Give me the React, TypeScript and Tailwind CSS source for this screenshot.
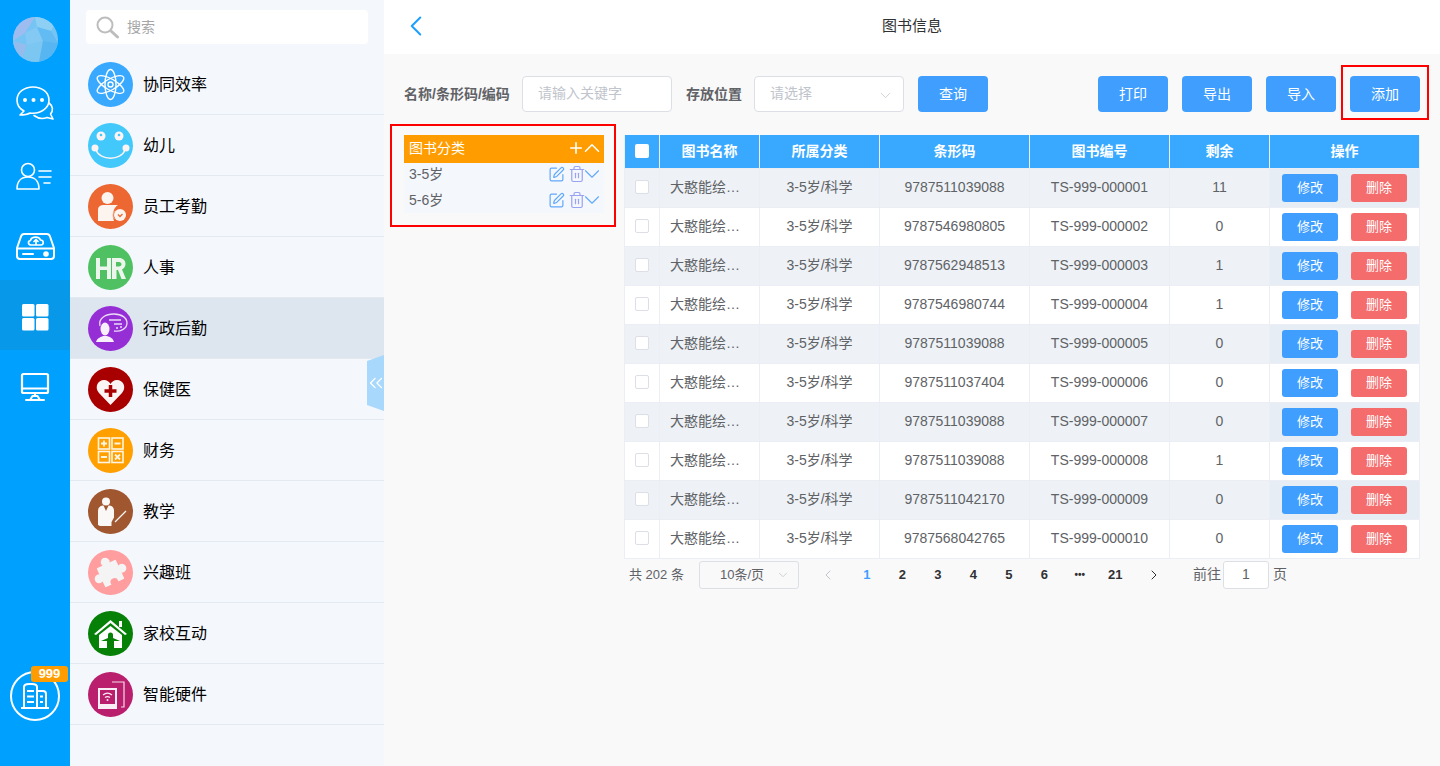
import { ChevronDown, ChevronLeft, ChevronRight, ChevronUp, ChevronsLeft, Plus, SquarePen, Trash2 } from "lucide-react";
import type { ReactNode } from "react";

const FONT = "font-['Liberation_Sans','Noto_Sans_CJK_SC',sans-serif]";

function RailIcon({ children, active, up }: { children: ReactNode; active?: boolean; up?: boolean }) {
  return (
    <div className={`h-[70px] flex items-center justify-center ${up ? "pb-1" : "pt-1"} ${active ? "bg-[#0798ea]" : ""}`}>
      <svg width="40" height="40" viewBox="0 0 40 40" fill="none" stroke="#fff" strokeWidth="1.6" strokeLinecap="round" strokeLinejoin="round">
        {children}
      </svg>
    </div>
  );
}

function MenuRow({ label, color, active, children }: { label: string; color: string; active?: boolean; children: ReactNode }) {
  return (
    <div className={`h-[61px] flex items-center pl-[18px] gap-[10px] border-b border-[#e3e9f1] ${active ? "bg-[#dde6ef]" : ""}`}>
      <svg width="45" height="45" viewBox="0 0 45 45" className="shrink-0">
        <circle cx="22.500" cy="22.500" r="22.500" fill={color} />
        {children}
      </svg>
      <span className="text-[16px] text-black pt-[2px]">{label}</span>
    </div>
  );
}

const books = [
  ["9787511039088", "TS-999-000001", "11"],
  ["9787546980805", "TS-999-000002", "0"],
  ["9787562948513", "TS-999-000003", "1"],
  ["9787546980744", "TS-999-000004", "1"],
  ["9787511039088", "TS-999-000005", "0"],
  ["9787511037404", "TS-999-000006", "0"],
  ["9787511039088", "TS-999-000007", "0"],
  ["9787511039088", "TS-999-000008", "1"],
  ["9787511042170", "TS-999-000009", "0"],
  ["9787568042765", "TS-999-000010", "0"],
];

function ToolButton({ label }: { label: string }) {
  return <button className="w-[70px] h-9 rounded bg-[#409eff] text-white text-[14px]">{label}</button>;
}

function TreeRow({ label }: { label: string }) {
  return (
    <div className="h-[22px] mb-1 flex items-center pl-[5px] text-[14px] text-[#606266]">
      <span className="flex-1">{label}</span>
      <SquarePen size={17} strokeWidth={1.7} className="text-[#62a9fb]" />
      <Trash2 size={18} strokeWidth={1.6} className="ml-[3px] text-[#9aa2f2]" />
      <ChevronDown size={26} strokeWidth={1} className="-ml-[7px] -mr-[1px] text-[#62a9fb]" />
    </div>
  );
}

export default function App() {
  return (
    <div className={`h-[766px] flex overflow-hidden ${FONT}`}>
      {/* icon rail */}
      <div className="w-[70px] shrink-0 bg-[#00a0ff] flex flex-col relative">
        <div className="h-[70px] pt-[17px] flex justify-center">
          <svg width="45" height="45" viewBox="0 0 45 45">
            <defs>
              <clipPath id="avatarClip">
                <circle cx="22.500" cy="22.500" r="22.500" />
              </clipPath>
            </defs>
            <g clipPath="url(#avatarClip)">
              <rect width="45" height="45" fill="#76c4f3" />
              <polygon points="0,0 22,0 12,16 0,24" fill="#9dbcf0" />
              <polygon points="22,0 45,0 38,14 24,10" fill="#8dcff5" />
              <polygon points="12,16 24,10 30,24 14,28" fill="#84c8f4" />
              <polygon points="0,24 14,28 8,45 0,45" fill="#94bdee" />
              <polygon points="24,10 38,14 45,26 30,24" fill="#62bbf2" />
              <polygon points="14,28 30,24 26,45 8,45" fill="#7cc6f2" />
              <polygon points="30,24 45,26 45,45 26,45" fill="#57b6f1" />
            </g>
          </svg>
        </div>
        <RailIcon up>
          <path d="M18 4C9 4 2 9.500 2 17c0 5 3 9 7 11l-4 4c4 0 7.500-.5 10-2 1 .2 2 .3 3 .3 9 0 16-5.800 16-13.300S27 4 18 4Z" />
          <circle cx="10" cy="17" r="2" fill="#fff" stroke="none" />
          <circle cx="18.500" cy="17" r="2" fill="#fff" stroke="none" />
          <circle cx="27" cy="17" r="2" fill="#fff" stroke="none" />
          <path d="M34 20c4 3 4.500 7.500 1.500 11l2.500 5-6-1.500c-4 1.500-9 1-13-2" />
        </RailIcon>
        <RailIcon>
          <circle cx="13" cy="13" r="6.500" />
          <path d="M2 32c0-8 4.500-12 11-12s11 4 11 12Z" />
          <path d="M24 14h12M24 20h12M29 26h6" />
        </RailIcon>
        <RailIcon>
          <path d="M9 7h23c1.500 0 2.500 1 3 2.500L39 21v8a3 3 0 0 1-3 3H5a3 3 0 0 1-3-3v-8L6 9.500C6.500 8 7.500 7 9 7Z" strokeWidth="2" />
          <path d="M3 21.500h35" strokeWidth="2" />
          <path d="M8 27h10" strokeWidth="2" />
          <circle cx="31" cy="27" r="2" fill="#fff" />
          <path d="M16 18c-3 0-3.500-4-.5-4.500 .5-4 8.500-5 10-.5 3.500 0 3.500 5 .5 5ZM21 18v-5M19 14.500l2-2 2 2" strokeWidth="1.700" />
        </RailIcon>
        <RailIcon active>
          <rect x="7" y="7" width="12.500" height="12.500" rx="1.500" fill="#fff" stroke="none" />
          <rect x="21" y="7" width="12.500" height="12.500" rx="1.500" fill="#fff" stroke="none" />
          <rect x="7" y="21" width="12.500" height="12.500" rx="1.500" fill="#fff" stroke="none" />
          <rect x="21" y="21" width="12.500" height="12.500" rx="1.500" fill="#fff" stroke="none" />
        </RailIcon>
        <RailIcon>
          <rect x="7" y="7" width="26" height="19" rx="1.500" strokeWidth="2.200" />
          <path d="M7 21.500h26" strokeWidth="2.200" />
          <path d="M20 26v3M15 33l2.500-4h5l2.500 4M11 33h18" strokeWidth="2" />
        </RailIcon>
        <div className="absolute left-[10px] top-[671px] w-[50px] h-[50px] rounded-full border-2 border-white flex items-center justify-center">
          <svg width="32" height="32" viewBox="0 0 32 32" fill="none" stroke="#fff" strokeWidth="2">
            <path d="M2 28h28" />
            <path d="M5 28V7c0-2 2-3 5-3h3c3 0 5 1 5 3v21" />
            <path d="M18 11h6c2 0 3 1 3 3v14" />
            <path d="M8 11h7M8 16.500h7M8 22h7M21 16.500h3M21 22h3" strokeWidth="2.200" />
          </svg>
        </div>
        <div className="absolute left-[31px] top-[666px] w-[37px] h-4 rounded-[3px] bg-[#ff9d00] text-white text-[13px] font-bold leading-4 text-center">
          999
        </div>
      </div>

      {/* app menu */}
      <div className="w-[314px] shrink-0 bg-[#f4f7fc] relative">
        <div className="h-[54px] pt-[10px] pl-4 pr-4">
          <div className="h-[34px] bg-white rounded flex items-center pl-[10px] gap-[8px]">
            <svg width="23" height="23" viewBox="0 0 23 23" fill="none" stroke="#bdbdbd" className="shrink-0">
              <circle cx="9" cy="9" r="7.500" strokeWidth="2" />
              <path d="M15 15l6.500 6" strokeWidth="3" strokeLinecap="round" />
            </svg>
            <span className="text-[14px] text-[#a6a6a6] pt-[1px]">搜索</span>
          </div>
        </div>
        <MenuRow label="协同效率" color="#39a9ff">
          <g fill="none" stroke="#fff" strokeWidth="1.400">
            <ellipse cx="22.500" cy="22.500" rx="15" ry="5.500" transform="rotate(30 22.500 22.500)" />
            <ellipse cx="22.500" cy="22.500" rx="15" ry="5.500" transform="rotate(90 22.500 22.500)" />
            <ellipse cx="22.500" cy="22.500" rx="15" ry="5.500" transform="rotate(150 22.500 22.500)" />
            <circle cx="22.500" cy="22.500" r="2.500" />
          </g>
        </MenuRow>
        <MenuRow label="幼儿" color="#43c8fb">
          <circle cx="13" cy="13" r="4.500" fill="#fdf3f3" />
          <circle cx="31" cy="13" r="4.500" fill="#fdf3f3" />
          <circle cx="13" cy="12" r="1.300" fill="#43c8fb" />
          <circle cx="31" cy="12" r="1.300" fill="#43c8fb" />
          <circle cx="7" cy="25" r="3.500" fill="#fdf3f3" />
          <circle cx="38" cy="25" r="3.500" fill="#fdf3f3" />
          <path d="M8 27c4 11 25 11 29 0" fill="none" stroke="#fdf3f3" strokeWidth="1.400" />
        </MenuRow>
        <MenuRow label="员工考勤" color="#ec6731">
          <circle cx="19.500" cy="14" r="6" fill="#fbf4ef" />
          <path d="M10 37V26c0-4 3-5 6-5h14c-5 3-6 10-4 16Z" fill="#fbf4ef" />
          <circle cx="32" cy="31" r="6" fill="#fbf4ef" />
          <path d="M30 30.500l2 2 2.500-2.500" fill="none" stroke="#ec6731" strokeWidth="1.300" />
          <path d="M26.500 27c-2 3-2 6 0 8" fill="none" stroke="#f5b59a" strokeWidth="1" />
        </MenuRow>
        <MenuRow label="人事" color="#4fc163">
          <path d="M8 13h4v8.500h7V13h4v21h-4v-9h-7v9H8Z" fill="#ecf6ed" />
          <path fillRule="evenodd" d="M24 13h7c4 0 6.500 2.500 6.500 6 0 2.500-1.500 4.500-3.500 5.500l4 9.500h-4.500l-3.500-9h-1.500v9H24Zm4 4v4.500h3c1.500 0 2.500-1 2.500-2.250S32.500 17 31 17Z" fill="#ecf6ed" />
        </MenuRow>
        <MenuRow label="行政后勤" color="#962ed6" active>
          <path d="M12 20c-2-8 6-12 14-12s13 4 13 9c0 6-7 9-13 8" fill="none" stroke="#eadcf6" strokeWidth="1.300" />
          <path d="M21 14h12M26 18h8M28 22h2M32 21h2" stroke="#eadcf6" strokeWidth="1.300" />
          <ellipse cx="17" cy="23" rx="4.500" ry="6.500" fill="#f7f0fb" />
          <path d="M8 36c1-4 5-5 7-6h4c3 1 6 2 7 6Z" fill="#f7f0fb" />
        </MenuRow>
        <MenuRow label="保健医" color="#a80000">
          <path d="M22.500 38 11 26C6 20 10 13 16 13c3 0 5.500 2 6.500 4 1-2 3.500-4 6.500-4 6 0 10 7 5 13Z" fill="#fbf4f4" />
          <path d="M20.750 18h3.500v4.250h4.250v3.500h-4.250V30h-3.500v-4.250H16.500v-3.500h4.250Z" fill="#a80000" />
        </MenuRow>
        <MenuRow label="财务" color="#ff9f00">
          <g fill="none" stroke="#fff5e0" strokeWidth="1.600">
            <rect x="10.500" y="10" width="11" height="11" />
            <rect x="24" y="10" width="11" height="11" />
            <rect x="10.500" y="23.500" width="11" height="11" />
            <rect x="24" y="23.500" width="11" height="11" />
            <path d="M13 15.500h6M16 12.500v6M26.500 15.500h6M13 29h6M27 26.500l5 5M32 26.500l-5 5" strokeWidth="1.800" />
          </g>
        </MenuRow>
        <MenuRow label="教学" color="#a0562f">
          <circle cx="18" cy="12.500" r="4" fill="#faf8f6" />
          <path d="M10 36V22c0-4 3-5.500 5.500-5.500L18 22l2.500-5.500c3 0 5.500 1.500 5.500 5v7L23.500 33v4H12Z" fill="#faf8f6" />
          <path d="M27 33l11-11" stroke="#faf8f6" strokeWidth="1.200" />
        </MenuRow>
        <MenuRow label="兴趣班" color="#ff9d9f">
          <g transform="rotate(-25 22.500 23.500)" fill="#f4f4f4">
            <rect x="12" y="13" width="21" height="21" rx="1" />
            <circle cx="22.500" cy="11" r="4.500" />
            <circle cx="35" cy="23.500" r="4.500" />
            <circle cx="10" cy="23.500" r="4.500" />
            <circle cx="22.500" cy="33" r="4" fill="#ff9d9f" />
          </g>
        </MenuRow>
        <MenuRow label="家校互动" color="#078007">
          <path d="M6 23 22.500 9 39 23l-2 1L22.500 12 8 24Z" fill="#fff" />
          <rect x="31" y="10" width="3" height="6" fill="#fff" />
          <path d="M11 37V24L22.500 15 34 24v13h-8v-7h6l-7-3v-3a2.500 2.500 0 1 0-5 0v3l-7 3h6v7Z" fill="#fff" />
        </MenuRow>
        <MenuRow label="智能硬件" color="#b91f6d">
          <path d="M24 10h12v25h-3" fill="none" stroke="#f6dcea" strokeWidth="1.200" />
          <rect x="10" y="16" width="19" height="21" fill="#f9eef4" />
          <rect x="12" y="18" width="15" height="14" fill="#b91f6d" />
          <path d="M15 23c3-2.500 6-2.500 9 0M17 25.500c2-1.500 3-1.500 5 0" fill="none" stroke="#f9eef4" strokeWidth="1.200" />
          <circle cx="19.500" cy="28" r="1" fill="#f9eef4" />
        </MenuRow>

        <div className="absolute right-0 top-[355px] w-[17px] h-[56px] bg-[#a8d8fb] [clip-path:polygon(0_6px,100%_0,100%_100%,0_calc(100%-6px))] flex items-center justify-center">
          <ChevronsLeft size={22} strokeWidth={1.4} className="text-white shrink-0" />
        </div>
      </div>

      {/* main */}
      <div className="flex-1 min-w-0 bg-[#f9f9fa] flex flex-col">
        <div className="h-[54px] shrink-0 bg-white flex items-center justify-center relative text-[15px] text-[#303133] pb-[2px]">
          <ChevronLeft size={34} strokeWidth={1.4} className="absolute left-[15px] top-[9px] text-[#1e9fff]" />
          图书信息
        </div>

        <div className="h-[36px] mt-[22px] ml-5 mr-5 flex items-center text-[14px]">
          <span className="font-bold text-[#606266] w-[118px] whitespace-nowrap">名称/条形码/编码</span>
          <div className="w-[150px] h-9 rounded border border-[#dcdfe6] bg-white pl-[15px] pb-[2px] flex items-center text-[#c0c4cc]">请输入关键字</div>
          <span className="font-bold text-[#606266] ml-[14px] w-[68px]">存放位置</span>
          <div className="w-[150px] h-9 rounded border border-[#dcdfe6] bg-white pl-[15px] pr-[9px] pb-[2px] flex items-center justify-between text-[#c0c4cc]">
            请选择
            <ChevronDown size={17} strokeWidth={1.1} className="mt-[4px]" />
          </div>
          <div className="ml-[14px] flex-1 flex justify-between">
            <ToolButton label="查询" />
            <div className="flex gap-[14px]">
              <ToolButton label="打印" />
              <ToolButton label="导出" />
              <ToolButton label="导入" />
              <div className="relative">
                <ToolButton label="添加" />
                <div className="absolute -left-[9px] -top-[11px] w-[88px] h-[55px] border-2 border-[#f00]" />
              </div>
            </div>
          </div>
        </div>

        <div className="mt-[12px] flex items-start">
          {/* category tree */}
          <div className="ml-[6px] w-[226px] h-[103px] border-2 border-[#f00] pt-[9px] pl-3">
            <div className="w-[200px]">
              <div className="h-[28px] bg-[#ff9d00] text-white text-[14px] flex items-center pl-[5px] pb-[2px]">
                <span className="flex-1">图书分类</span>
                <Plus size={18} strokeWidth={2.2} />
                <ChevronUp size={26} strokeWidth={1.4} className="-ml-[6px] -mr-[1px]" />
              </div>
              <div className="bg-[#f4f7fc] h-[50px]">
                <TreeRow label="3-5岁" />
                <TreeRow label="5-6岁" />
              </div>
            </div>
          </div>

          <div className="ml-2 w-[795px]">
            <table className="w-[795px] table-fixed border-collapse text-[14px] text-[#606266] mt-[11px]">
              <colgroup>
                <col className="w-[35px]" />
                <col className="w-[100px]" />
                <col className="w-[120px]" />
                <col className="w-[150px]" />
                <col className="w-[140px]" />
                <col className="w-[100px]" />
                <col className="w-[150px]" />
              </colgroup>
              <thead>
                <tr className="h-[33px] bg-[#39a9ff] text-white font-bold">
                  <th className="border-x border-[#ebeef5]">
                    <span className="block mx-auto w-[14px] h-[14px] rounded-[2px] bg-white" />
                  </th>
                  {["图书名称", "所属分类", "条形码", "图书编号", "剩余", "操作"].map((h) => (
                    <th key={h} className="border-x border-[#ebeef5] font-bold">{h}</th>
                  ))}
                </tr>
              </thead>
              <tbody>
                {books.map(([code, num, left], i) => (
                  <tr key={num} className={`h-[39px] text-center ${i % 2 === 0 ? "bg-[#eef2f6]" : "bg-white"}`}>
                    <td className="border border-[#ebeef5]">
                      <span className="block mx-auto mb-[2px] w-[14px] h-[14px] rounded-[2px] border border-[#dcdfe6] bg-white" />
                    </td>
                    <td className="border border-[#ebeef5] px-[10px] text-left whitespace-nowrap">大憨能绘…</td>
                    <td className="border border-[#ebeef5]">3-5岁/科学</td>
                    <td className="border border-[#ebeef5]">{code}</td>
                    <td className="border border-[#ebeef5]">{num}</td>
                    <td className="border border-[#ebeef5]">{left}</td>
                    <td className={`border border-[#ebeef5] ${i % 2 === 0 ? "bg-[#e7edf5]" : ""}`}>
                      <div className="flex justify-center gap-[13px]">
                        <button className="w-[56px] h-[28px] rounded-[3px] bg-[#409eff] text-white text-[13px]">修改</button>
                        <button className="w-[56px] h-[28px] rounded-[3px] bg-[#f56c6c] text-white text-[13px]">删除</button>
                      </div>
                    </td>
                  </tr>
                ))}
              </tbody>
            </table>

            <div className="h-[28px] mt-[2px] flex items-center text-[13px] text-[#606266] pl-[5px]">
              <span className="w-[70px] text-[13px] whitespace-nowrap">共 202 条</span>
              <div className="w-[100px] h-[28px] rounded-[3px] border border-[#dcdfe6] pl-5 pr-2 flex items-center justify-between">
                10条/页
                <ChevronDown size={14} strokeWidth={1.3} className="text-[#c0c4cc]" />
              </div>
              <ChevronLeft size={16} strokeWidth={1.5} className="ml-[21px] text-[#c0c4cc]" />
              <div className="ml-[13px] flex items-center font-bold text-[#303133] text-[13px]">
                {["1", "2", "3", "4", "5", "6", "•••", "21"].map((p) => (
                  <span key={p} className={`w-[35.500px] text-center ${p === "1" ? "text-[#409eff]" : ""} ${p === "•••" ? "text-[10px]" : ""}`}>{p}</span>
                ))}
              </div>
              <ChevronRight size={16} strokeWidth={1.5} className="ml-[13px] text-[#303133]" />
              <span className="ml-[31px] text-[14px]">前往</span>
              <div className="ml-[2px] w-[46px] h-[28px] rounded-[3px] border border-[#dcdfe6] bg-white flex items-center justify-center text-[14px]">1</div>
              <span className="ml-[4px] text-[14px]">页</span>
            </div>
          </div>
        </div>
      </div>
    </div>
  );
}
